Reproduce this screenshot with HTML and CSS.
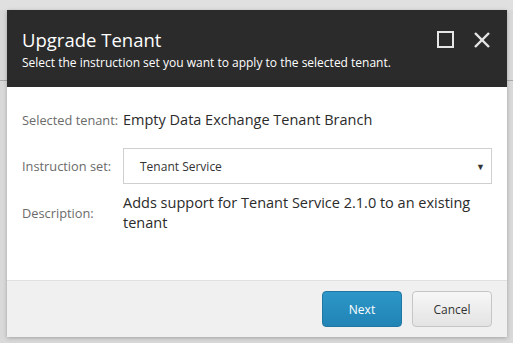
FILE: index.html
```html
<!DOCTYPE html>
<html lang="en">
<head>
    <meta charset="UTF-8">
    <title>Upgrade Tenant</title>
    <link rel="stylesheet" href="styles.css">
</head>
<body>
    <div class="backdrop">
        <div class="dialog">
            <div class="dialog-header">
                <div class="header-text">
                    <h1>Upgrade Tenant</h1>
                    <p>Select the instruction set you want to apply to the selected tenant.</p>
                </div>
                <div class="header-icons">
                    <svg width="18" height="18" viewBox="0 0 18 18" fill="none" stroke="#e6e6e6" stroke-width="2">
                        <rect x="1" y="1" width="15" height="15"></rect>
                    </svg>
                    <svg width="18" height="18" viewBox="0 0 18 18" fill="none" stroke="#e6e6e6" stroke-width="2.4">
                        <line x1="2" y1="2" x2="16" y2="16"></line>
                        <line x1="16" y1="2" x2="2" y2="16"></line>
                    </svg>
                </div>
            </div>

            <div class="dialog-body">
                <div class="row">
                    <span class="label">Selected tenant:</span>
                    <span class="value">Empty Data Exchange Tenant Branch</span>
                </div>
                <div class="row row-select">
                    <span class="label">Instruction set:</span>
                    <div class="select">
                        <span>Tenant Service</span>
                        <span class="arrow">&#9660;</span>
                    </div>
                </div>
                <div class="row row-desc">
                    <span class="label">Description:</span>
                    <span class="value">Adds support for Tenant Service 2.1.0 to an existing tenant</span>
                </div>
            </div>

            <div class="dialog-footer">
                <button class="btn btn-primary">Next</button>
                <button class="btn">Cancel</button>
            </div>
        </div>
    </div>
</body>
</html>
```

FILE: styles.css
```css
body {
  margin: 0;
  font-family: 'Open Sans', 'Segoe UI', sans-serif;
  background: #dcdcdc;
}

.backdrop {
  height: 343px;
  padding: 10px 6px 0 7px;
  box-sizing: border-box;
  background:
    linear-gradient(#e0e0e0, #e0e0e0) 0 0 / 100% 10px no-repeat,
    linear-gradient(#a9a9a9, #a9a9a9) 0 80px / 100% 1px no-repeat,
    #d9d9d9;
}

.dialog {
  width: 500px;
  background: #fff;
  box-shadow: 0 1px 4px rgba(0, 0, 0, 0.25);
}

.dialog-header {
  background: #2b2b2b;
  color: #fff;
  height: 77px;
  padding: 0 16px 0 15px;
  display: flex;
  justify-content: space-between;
  box-sizing: border-box;
}

.dialog-header h1 {
  margin: 0;
  padding-top: 17px;
  font-size: 18.5px;
  font-weight: 400;
  line-height: 26px;
}

.dialog-header p {
  margin: 2px 0 0;
  font-size: 12px;
  line-height: 16px;
}

.header-icons {
  display: flex;
  gap: 18px;
  padding-top: 21px;
}

.dialog-body {
  padding: 23px 15px 0;
  height: 193px;
  box-sizing: border-box;
  display: flex;
  flex-direction: column;
}

.row {
  display: flex;
  align-items: center;
}

.row-select {
  margin-top: 18px;
}

.row-desc {
  margin-top: 9px;
}

.label {
  width: 101px;
  flex-shrink: 0;
  font-size: 12.8px;
  color: #6b6b6b;
}

.value {
  font-size: 14.5px;
  line-height: 20px;
  color: #2b2b2b;
}

.select {
  flex: 1;
  height: 36px;
  border: 1px solid #cfcfcf;
  box-sizing: border-box;
  display: flex;
  align-items: center;
  justify-content: space-between;
  padding: 0 6px 0 16px;
  font-size: 12px;
  color: #333;
}

.arrow {
  font-size: 9px;
  color: #333;
}

.dialog-footer {
  height: 56px;
  background: #f0f0f0;
  border-top: 1px solid #e0e0e0;
  display: flex;
  justify-content: flex-end;
  align-items: center;
  gap: 10px;
  padding: 0 15px 0 0;
}

.btn {
  width: 80px;
  height: 36px;
  border: 1px solid #c6c6c6;
  border-radius: 4px;
  background: linear-gradient(#f7f7f7, #e3e3e3);
  font-family: inherit;
  font-size: 12px;
  color: #333;
  cursor: pointer;
}

.btn-primary {
  background: linear-gradient(#2d96c8, #2184b5);
  border-color: #1f77a3;
  color: #fff;
}
```
